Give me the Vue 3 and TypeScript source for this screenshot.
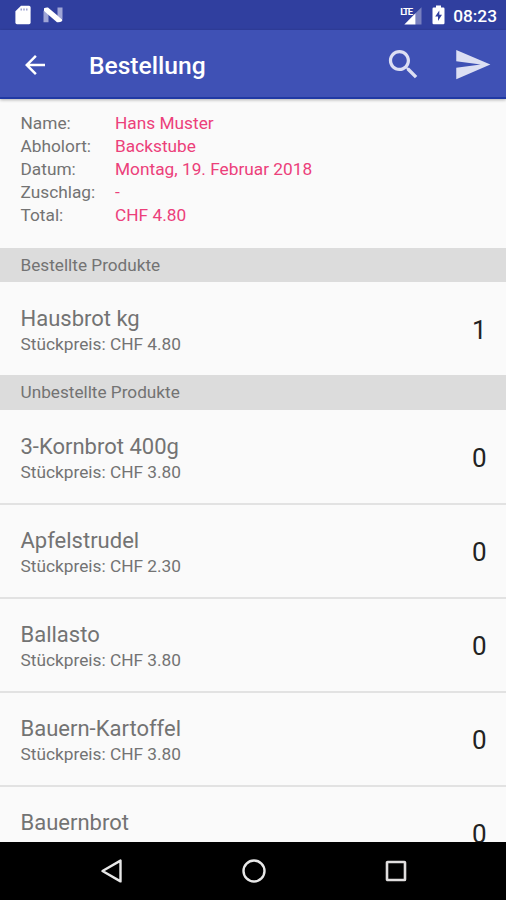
<script setup lang="ts">
interface Product {
  name: string
  price: string
  quantity: number
}

interface Section {
  title: string
  products: Product[]
}

const details: { label: string; value: string }[] = [
  { label: 'Name:', value: 'Hans Muster' },
  { label: 'Abholort:', value: 'Backstube' },
  { label: 'Datum:', value: 'Montag, 19. Februar 2018' },
  { label: 'Zuschlag:', value: '-' },
  { label: 'Total:', value: 'CHF 4.80' },
]

const sections: Section[] = [
  {
    title: 'Bestellte Produkte',
    products: [{ name: 'Hausbrot kg', price: 'CHF 4.80', quantity: 1 }],
  },
  {
    title: 'Unbestellte Produkte',
    products: [
      { name: '3-Kornbrot 400g', price: 'CHF 3.80', quantity: 0 },
      { name: 'Apfelstrudel', price: 'CHF 2.30', quantity: 0 },
      { name: 'Ballasto', price: 'CHF 3.80', quantity: 0 },
      { name: 'Bauern-Kartoffel', price: 'CHF 3.80', quantity: 0 },
      { name: 'Bauernbrot', price: 'CHF 3.80', quantity: 0 },
    ],
  },
]
</script>

<template>
  <div class="screen">
    <div class="status-bar">
      <svg class="sd" width="16" height="20" viewBox="0 0 16 20">
        <path d="M6 .8h8a1.6 1.6 0 0 1 1.6 1.6v15.200a1.600 1.600 0 0 1-1.600 1.600H2a1.600 1.600 0 0 1-1.600-1.600V6.200z" fill="#fff" />
        <path d="M6.200 3.400v2M9 3.400v2M11.800 3.400v2" stroke="#8e94c8" stroke-width="1.300" />
      </svg>
      <svg class="nougat" width="20" height="16" viewBox="0 0 20 16">
        <path d="M.5 3.500L5.500 7v8.200H.5zM14.500.5h5v12l-5-3.500z" fill="#9fa5d6" />
        <path d="M1 1.200Q3 .2 5 .5L19.200 12.500V14q-2.500 1.800-5.200 1.200L1 4z" fill="#fff" />
      </svg>
      <div class="status-right">
        <div class="signal">
          <svg width="22" height="19" viewBox="0 0 22 19">
            <path d="M21.500 1.200V18.500h-6V7.200z" fill="#7880bf" />
            <path d="M15.500 7.200V18.500H4.300z" fill="#fff" />
          </svg>
          <span class="lte">LTE</span>
        </div>
        <svg class="battery" width="13" height="20" viewBox="0 0 13 20">
          <path d="M4 .5h5v2h2.300q1.200 0 1.200 1.200v14.300q0 1.200-1.200 1.200H1.700Q.5 19.200.5 18V3.700q0-1.200 1.200-1.200H4z" fill="#fff" />
          <path d="M7.300 5.500L3.200 11.600H6V16l4-6.200H7.300z" fill="#303f9f" />
        </svg>
        <span class="clock">08:23</span>
      </div>
    </div>

    <header class="app-bar">
      <svg class="back" width="30" height="30" viewBox="0 0 24 24">
        <path d="M20 11H7.830l5.590-5.590L12 4l-8 8 8 8 1.410-1.410L7.830 13H20v-2z" fill="#fff" />
      </svg>
      <h1>Bestellung</h1>
      <svg class="search" width="39" height="39" viewBox="0 0 24 24">
        <path d="M15.500 14h-.790l-.280-.270C15.410 12.590 16 11.110 16 9.500 16 5.910 13.090 3 9.500 3S3 5.910 3 9.500 5.910 16 9.500 16c1.610 0 3.090-.590 4.230-1.570l.270.280v.790l5 4.990L20.490 19l-4.990-5zm-6 0C7.010 14 5 11.990 5 9.500S7.010 5 9.500 5 14 7.010 14 9.500 11.990 14 9.500 14z" fill="#dcdff3" />
      </svg>
      <svg class="send" width="39" height="39" viewBox="0 0 24 24">
        <path d="M2.010 21L23 12 2.010 3 2 10l15 2-15 2z" fill="#dcdff3" />
      </svg>
    </header>

    <main class="content">
      <dl class="details">
        <template v-for="row in details" :key="row.label">
          <dt>{{ row.label }}</dt>
          <dd>{{ row.value }}</dd>
        </template>
      </dl>

      <section v-for="section in sections" :key="section.title">
        <h2>{{ section.title }}</h2>
        <ul>
          <li v-for="product in section.products" :key="product.name">
            <div>
              <p class="name">{{ product.name }}</p>
              <p class="price">Stückpreis: {{ product.price }}</p>
            </div>
            <span class="quantity">{{ product.quantity }}</span>
          </li>
        </ul>
      </section>
    </main>

    <nav class="nav-bar">
      <svg width="24" height="26" viewBox="0 0 24 26">
        <path d="M20.500 2.600v20.800L2.500 13z" fill="none" stroke="#e8e8e8" stroke-width="2.400" stroke-linejoin="round" />
      </svg>
      <svg width="26" height="26" viewBox="0 0 26 26">
        <circle cx="13" cy="13" r="10.500" fill="none" stroke="#e8e8e8" stroke-width="2.400" />
      </svg>
      <svg width="24" height="24" viewBox="0 0 24 24">
        <rect x="3" y="3" width="18" height="18" rx=".6" fill="none" stroke="#e0dede" stroke-width="2.600" />
      </svg>
    </nav>
  </div>
</template>

<style>
body {
  margin: 0;
  background: #000;
}
</style>

<style scoped>
.screen {
  width: 506px;
  height: 900px;
  display: flex;
  flex-direction: column;
  overflow: hidden;
  background: #fafafa;
  font-family: Roboto, 'Liberation Sans', sans-serif;
  color: #737373;
}

.status-bar {
  flex: none;
  height: 30px;
  box-sizing: border-box;
  display: flex;
  align-items: center;
  padding: 0 9px 0 14.5px;
  background: #303f9f;
}

.nougat {
  margin-left: 12px;
}

.status-right {
  display: flex;
  align-items: center;
  margin-left: auto;
}

.signal {
  position: relative;
  display: flex;
}

.lte {
  position: absolute;
  left: 0;
  top: 1px;
  font-size: 9.5px;
  line-height: 9px;
  font-weight: 700;
  letter-spacing: -1.2px;
  color: #fff;
}

.battery {
  margin-left: 10px;
}

.clock {
  margin: 1px 0 0 8px;
  font-size: 17.3px;
  font-weight: 500;
  color: #fff;
}

.app-bar {
  flex: none;
  height: 69px;
  box-sizing: border-box;
  display: flex;
  align-items: center;
  padding: 2px 14.5px 0 20px;
  background: #3f51b5;
  border-bottom: 2px solid #2039a4;
  box-shadow: 0 1px 3px rgba(0, 0, 0, 0.3);
  z-index: 1;
}

h1 {
  flex: 1;
  margin: 2px 0 0 39px;
  font-size: 24.6px;
  font-weight: 500;
  color: #fff;
}

.send {
  margin-left: 30px;
}

.content {
  flex: 1;
  min-height: 0;
  overflow: hidden;
}

.details {
  display: grid;
  grid-template-columns: 94.5px 1fr;
  grid-auto-rows: 23.2px;
  height: 149px;
  margin: 0;
  padding: 12.7px 20.5px 0;
  box-sizing: border-box;
  font-size: 17.3px;
  line-height: 23.2px;
}

dd {
  margin: 0;
  color: #ec407a;
}

h2 {
  height: 34px;
  margin: 0;
  padding-left: 20.5px;
  background: #dcdcdc;
  font-size: 17.2px;
  line-height: 34px;
  font-weight: 400;
}

section + section h2 {
  height: 35px;
  line-height: 35px;
}

ul {
  margin: 0;
  padding: 0;
  list-style: none;
}

li {
  height: 93px;
  box-sizing: border-box;
  display: flex;
  justify-content: space-between;
  padding: 23px 19.5px 0 20.5px;
}

li + li {
  height: 94px;
  border-top: 2px solid #e2e2e2;
  padding-top: 22px;
}

.name,
.price {
  margin: 0;
}

.name {
  font-size: 22px;
  line-height: 28px;
}

.price {
  font-size: 17.3px;
  line-height: 22px;
}

.quantity {
  padding-top: 8px;
  font-size: 26px;
  line-height: 34px;
  color: #222;
}

.nav-bar {
  flex: none;
  height: 58px;
  display: flex;
  align-items: center;
  justify-content: space-between;
  box-sizing: border-box;
  padding: 0 98px 0 100px;
  background: #000;
}
</style>
